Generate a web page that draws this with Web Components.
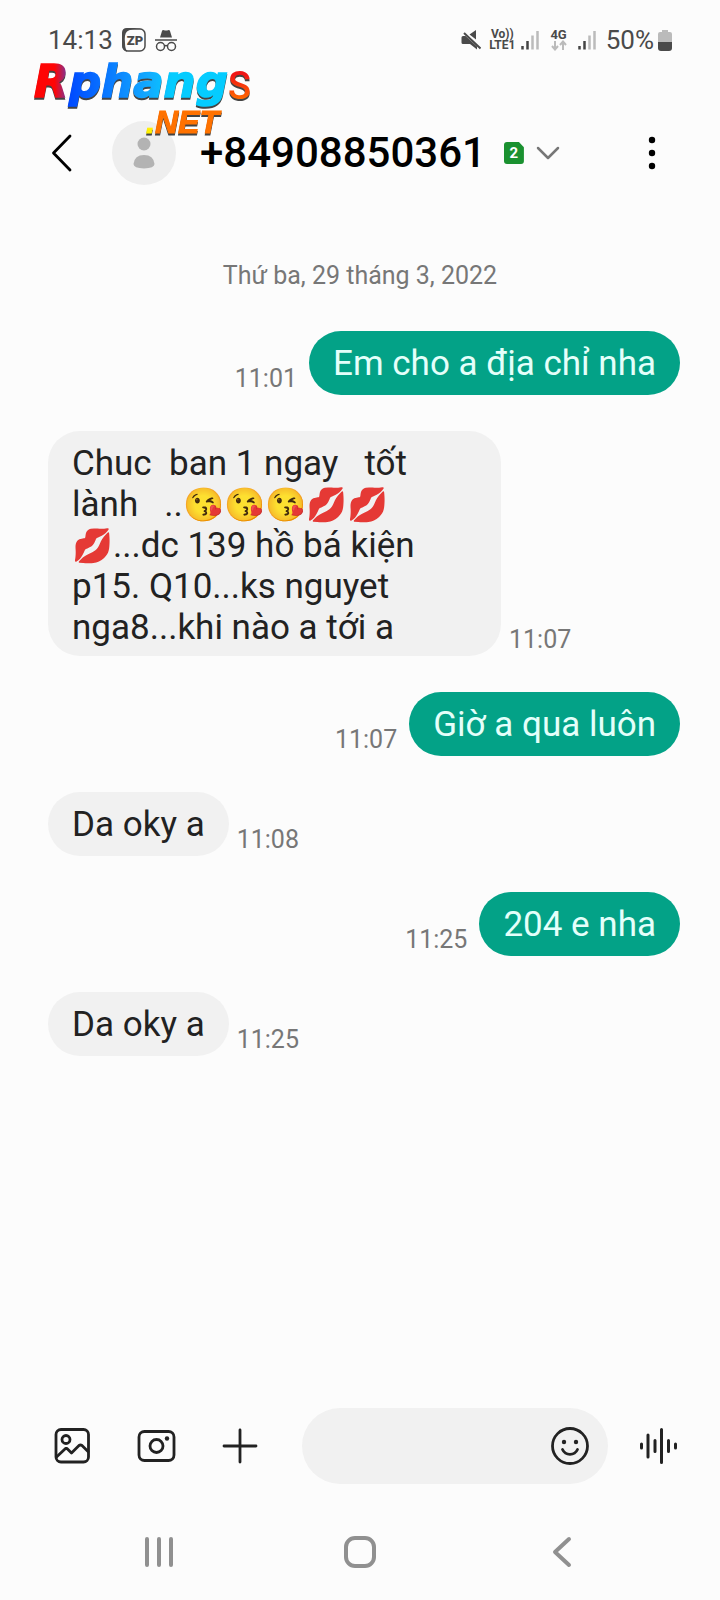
<!DOCTYPE html>
<html lang="vi">
<head>
<meta charset="utf-8">
<meta name="viewport" content="width=device-width, initial-scale=1">
<title>Tin nhắn</title>
<style>
html,body{margin:0;background:#fcfcfc}
body{font-family:Roboto,"Noto Sans",sans-serif;color:#222}
</style>
</head>
<body>
<chat-screen>
  <phone-status slot="top"></phone-status>
  <contact-header slot="top" sim="2">+84908850361</contact-header>
  <day-label>Thứ ba, 29 tháng 3, 2022</day-label>
  <chat-message sent time="11:01">Em cho a địa chỉ nha</chat-message>
  <chat-message time="11:07">Chuc  ban 1 ngay   tốt lành   ..😘😘😘💋💋💋...dc 139 hồ bá kiện p15. Q10...ks nguyet nga8...khi nào a tới a</chat-message>
  <chat-message sent time="11:07">Giờ a qua luôn</chat-message>
  <chat-message time="11:08">Da oky a</chat-message>
  <chat-message sent time="11:25">204 e nha</chat-message>
  <chat-message time="11:25">Da oky a</chat-message>
  <chat-composer slot="bottom"></chat-composer>
  <system-nav slot="bottom"></system-nav>
  <site-watermark slot="overlay"></site-watermark>
</chat-screen>
<script>
const define = (name, html, setup) => customElements.define(name, class extends HTMLElement {
  constructor() {
    super();
    this.attachShadow({mode: 'open'}).innerHTML = html;
  }
  connectedCallback() { if (setup) setup(this, this.shadowRoot); }
});
const BUTTON = `button{appearance:none;border:0;background:none;padding:0;margin:0;color:inherit;font:inherit;display:flex;align-items:center;justify-content:center;flex:none;cursor:pointer}svg{display:block;flex:none}`;

define('chat-screen', `
<style>
:host{display:flex;flex-direction:column;min-height:100vh;position:relative}
main{flex:1;display:flex;flex-direction:column;gap:36px;padding:75px 40px 36px 48px}
.overlay{position:absolute;left:32px;top:56px;pointer-events:none}
</style>
<slot name="top"></slot>
<main><slot></slot></main>
<slot name="bottom"></slot>
<div class="overlay"><slot name="overlay"></slot></div>`);

const bars = `<svg width="18" height="20" viewBox="0 0 18 20" aria-hidden="true"><path d="M1.500 16v3.500M6.500 11v8.500" stroke="#444" stroke-width="2.500"/><path d="M11.500 5.500v14M16.500 1v18.500" stroke="#bbb" stroke-width="2.500"/></svg>`;
define('phone-status', `
<style>
:host{display:flex;justify-content:space-between;align-items:center;height:80px;padding:0 48px;color:#4a4a4a;font-size:26px;line-height:32px}
div{display:flex;align-items:center}
.left{gap:8px}
svg{display:block;flex:none}
.net{display:flex;flex-direction:column;align-items:center;font-size:12px;line-height:11px;font-weight:700}
.vo{margin:0 6px 0 8px}
.four{margin:0 11px 0 11px;font-size:13px}
.pct{margin:0 4px 0 10px}
</style>
<div class="left"><span>14:13</span>
<svg width="26" height="26" viewBox="0 0 26 26" aria-hidden="true"><rect x="2" y="2" width="22" height="22" rx="5" fill="none" stroke="#4a4a4a" stroke-width="1.500"/><path d="M1 18V6q0-5 5-5h16Q9 1.500 6 4.500T4 16q0 6 2.500 9Q1 23.500 1 18z" fill="#4a4a4a"/><text x="14" y="17.500" text-anchor="middle" font-family="Roboto" font-weight="900" font-size="13" fill="#4a4a4a">ZP</text></svg>
<svg width="22" height="23" viewBox="0 0 22 23" fill="none" stroke="#4a4a4a" aria-hidden="true"><path d="M5 8.500L7 2q.5-1.500 2-.8 2 .8 4 0 1.500-.7 2 .8l2 6.500z" fill="#4a4a4a" stroke="none"/><path d="M0 11h22" stroke-width="1.500"/><circle cx="5.500" cy="17.500" r="4" stroke-width="1.500"/><circle cx="16.500" cy="17.500" r="4" stroke-width="1.500"/><path d="M9.500 17q1.500-1.200 3 0" stroke-width="1.500"/></svg>
</div>
<div>
<svg width="20" height="20" viewBox="0 0 20 20" aria-hidden="true"><path d="M.5 7.500q0-1.500 1.500-1.500h2.500L16 16.500v3L9 14H2q-1.500 0-1.500-1.500zM15 0v9.500L8.500 4.500z" fill="#4a4a4a"/><path d="M3 3l16.500 15.500" stroke="#4a4a4a" stroke-width="2"/></svg>
<span class="net vo"><span>Vo))</span><span>LTE1</span></span>
${bars}
<span class="net four"><span>4G</span><svg width="16" height="11" viewBox="0 0 16 11" fill="none" stroke="#bbb" stroke-width="2" aria-hidden="true"><path d="M4 1v8M1 6l3 3.500L7 6M12 10V2M9 5l3-3.500L15 5"/></svg></span>
${bars}
<span class="pct">50%</span>
<svg width="14" height="21" viewBox="0 0 14 21" aria-hidden="true"><path d="M4 0h6v2h2q2 0 2 2v8H0V4q0-2 2-2h2z" fill="#bbb"/><path d="M0 12h14v6q0 3-3 3H3q-3 0-3-3z" fill="#4a4a4a"/></svg>
</div>`);

define('contact-header', `
<style>${BUTTON}
:host{display:flex;align-items:center;height:64px;padding:41px 48px 0;color:#000}
.back{width:28px;height:48px}
.avatar{width:64px;height:64px;flex:none;border-radius:50%;background:#eee;margin:0 24px 0 36px;display:flex;align-items:center;justify-content:center}
h1{margin:0;font-size:42px;line-height:48px;font-weight:500}
.badge{width:20px;height:22px;flex:none;margin-left:18px;border-radius:3px;background:#1a9130;clip-path:polygon(0 0,75% 0,100% 24%,100% 100%,0 100%);color:#fff;font-size:15px;line-height:22px;font-weight:700;text-align:center}
.open{width:24px;height:48px;margin-left:12px}
.more{width:40px;height:48px;margin-left:auto}
</style>
<button class="back" aria-label="Quay lại"><svg width="28" height="40" viewBox="0 0 28 40" fill="none" stroke="#000" stroke-width="2.800" stroke-linecap="round" stroke-linejoin="round"><path d="M22 3L5.500 20 22 37"/></svg></button>
<span class="avatar"><svg width="24" height="34" viewBox="0 0 24 34" fill="#b3b3b3" aria-hidden="true"><circle cx="12" cy="8" r="6.500"/><path d="M1.500 28q1-9 10.500-9t10.500 9q0 4-10.500 4.500Q1.500 32 1.500 28z"/></svg></span>
<h1><slot></slot></h1>
<span class="badge"></span>
<button class="open" aria-label="Chi tiết"><svg width="24" height="16" viewBox="0 0 24 16" fill="none" stroke="#777" stroke-width="2.500" stroke-linecap="round" stroke-linejoin="round"><path d="M2 3l10 10L22 3"/></svg></button>
<button class="more" aria-label="Thêm"><svg width="8" height="34" viewBox="0 0 8 34" fill="#000"><circle cx="4" cy="4" r="3.200"/><circle cx="4" cy="17" r="3.200"/><circle cx="4" cy="30" r="3.200"/></svg></button>`,
(el, root) => { root.querySelector('.badge').textContent = el.getAttribute('sim'); });

define('day-label', `
<style>:host{display:block;text-align:center;color:#777;font-size:25px;line-height:32px;padding:0 8px 3px 0}</style>
<slot></slot>`);

define('chat-message', `
<style>
:host{display:flex;align-items:flex-end;gap:8px}
:host([sent]){flex-direction:row-reverse;gap:12px}
p{box-sizing:border-box;margin:0;min-height:64px;max-width:453px;padding:12px 24px 8px;border-radius:32px;background:#f1f1f1;color:#222;font-size:35px;line-height:41px;white-space:pre-wrap}
:host([sent]) p{background:#03a287;color:#e4fffa}
.emoji{font-size:33px;line-height:32px}
time{color:#777;font-size:25px;line-height:32px}
</style>
<p></p><time></time>`,
(el, root) => {
  const p = root.querySelector('p');
  p.textContent = '';
  for (const part of el.textContent.split(/(\p{Extended_Pictographic}+)/u).filter(Boolean)) {
    // digits and letters stay in the text font, pictographs get their own size
    if (/^\p{Extended_Pictographic}/u.test(part)) {
      const s = document.createElement('span');
      s.className = 'emoji';
      s.textContent = part;
      p.append(s);
    } else p.append(part);
  }
  root.querySelector('time').textContent = el.getAttribute('time');
});

define('chat-composer', `
<style>${BUTTON}
:host{display:flex;align-items:center;padding:0 40px 0 52px;color:#222}
.tools{display:flex;gap:44px;margin-right:42px}
.tools button,.voice,.smile{width:40px;height:48px}
.field{flex:1;min-width:0;display:flex;align-items:center;height:76px;box-sizing:border-box;padding:0 18px 0 28px;border-radius:38px;background:#f1f1f1}
input{flex:1;width:100%;min-width:0;padding:0;border:0;outline:0;background:none;font:inherit;font-size:32px;color:inherit}
.voice{margin-left:32px}
svg{fill:none;stroke:#222;stroke-width:2.800;stroke-linecap:round;stroke-linejoin:round}
.dot{fill:#222;stroke:none}
</style>
<div class="tools">
<button aria-label="Thư viện"><svg width="40" height="40" viewBox="0 0 40 40"><rect x="4" y="3.500" width="32.500" height="32.500" rx="5"/><circle cx="14" cy="13.500" r="4"/><path d="M4.500 31l9-8.500 1.500 0 4.500 4.500 7.500-7.500q1.500-1 3 0l6 6"/></svg></button>
<button aria-label="Máy ảnh"><svg width="40" height="40" viewBox="0 0 40 40"><rect x="3" y="5.500" width="35" height="29" rx="5.500"/><circle cx="20.500" cy="20" r="6.500"/><circle class="dot" cx="31" cy="12.500" r="2.200"/></svg></button>
<button aria-label="Thêm tệp"><svg width="40" height="40" viewBox="0 0 40 40"><path d="M20 4v32M4 20h32"/></svg></button>
</div>
<div class="field"><input type="text" aria-label="Nhập tin nhắn">
<button class="smile" aria-label="Biểu tượng cảm xúc"><svg width="40" height="40" viewBox="0 0 40 40"><circle cx="20" cy="20" r="17.500"/><path d="M12.500 23.500c3 6.500 12 6.500 15 0"/><circle class="dot" cx="14" cy="16" r="2.200"/><circle class="dot" cx="26" cy="16" r="2.200"/></svg></button></div>
<button class="voice" aria-label="Ghi âm"><svg width="40" height="40" viewBox="0 0 40 40"><path stroke-width="3" d="M1.500 18v4M8 9v22M15 14.500v11M21.500 3.500v33M28.500 14.500v11M35.500 18v4"/></svg></button>`);

define('system-nav', `
<style>${BUTTON}
:host{display:flex;justify-content:space-between;padding:44px 135px 24px}
button{width:48px;height:48px}
svg{fill:none;stroke:#909090;stroke-width:4;stroke-linecap:round;stroke-linejoin:round}
</style>
<button aria-label="Gần đây"><svg width="36" height="36" viewBox="0 0 36 36"><path d="M6 5v26M18 5v26M30 5v26"/></svg></button>
<button aria-label="Trang chủ"><svg width="36" height="36" viewBox="0 0 36 36"><rect x="4" y="4" width="28" height="28" rx="9"/></svg></button>
<button aria-label="Trở về"><svg width="36" height="36" viewBox="0 0 36 36"><path d="M26 5L12 18l14 13"/></svg></button>`);

define('site-watermark', `
<style>
:host{display:block}
svg{display:block;filter:drop-shadow(0 2px 0 #444)}
</style>
<svg width="224" height="84" viewBox="0 0 224 84">
<defs>
<linearGradient id="r"><stop offset=".6" stop-color="#fe0505"/><stop offset="1" stop-color="#6a3bb0"/></linearGradient>
<linearGradient id="b"><stop offset="0" stop-color="#0048ff"/><stop offset=".5" stop-color="#12aaff"/><stop offset=".65" stop-color="#05ccff"/><stop offset="1" stop-color="#05ccff"/></linearGradient>
<linearGradient id="o" x1="0" y1="0" x2="0" y2="1"><stop offset=".25" stop-color="#f01616"/><stop offset=".8" stop-color="#ff6a00"/></linearGradient>
</defs>
<g font-family="DejaVu Sans" font-weight="700" font-style="oblique" font-size="45" stroke-width="1.500"><text x="2" y="41" fill="url(#r)" stroke="url(#r)">R</text><text x="37" y="41" fill="url(#b)" stroke="url(#b)">phang</text></g>
<text x="196" y="43" font-family="Roboto" font-weight="500" font-size="38" fill="url(#o)">S</text>
<g font-family="Liberation Sans" font-weight="700" font-style="italic" font-size="32" fill="#ff7200"><text x="114" y="77" fill="#fff000" stroke="#fff000">.</text><text x="123" y="77" stroke="#ff7200">NET</text></g>
</svg>`);
</script>
</body>
</html>
